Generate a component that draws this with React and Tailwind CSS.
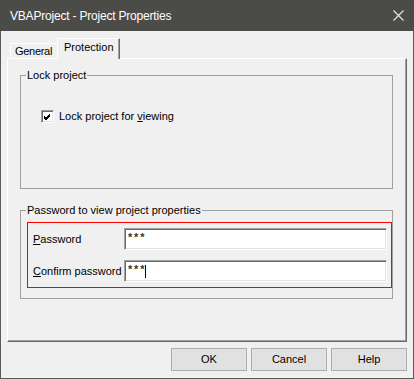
import React from "react";

const font = { fontFamily: '"Liberation Sans", Arial, sans-serif' };

function Checkbox() {
  return (
    <span className="w-[13px] h-[13px] bg-white border border-t-[#a0a0a0] border-l-[#a0a0a0] border-b-white border-r-white shadow-[inset_1px_1px_0_#696969,inset_-1px_-1px_0_#e3e3e3] flex items-center justify-center">
      <svg width="9" height="9" viewBox="0 0 9 9">
        <path d="M1 4 L3 6 L7 2 M1 5 L3 7 L7 3 M1 6 L3 8 L7 4" stroke="#000" strokeWidth="1" fill="none" />
      </svg>
    </span>
  );
}

function Field({ value, caret }) {
  return (
    <div className="w-[263px] h-[22px] bg-white border border-t-[#a0a0a0] border-l-[#a0a0a0] border-b-white border-r-white shadow-[inset_1px_1px_0_#696969,inset_-1px_-1px_0_#e3e3e3] pl-[3px] flex items-center">
      <span className="text-[11px] font-bold tracking-[1.8px] leading-none -mt-[3px] text-[#333]">{value}</span>
      {caret && <span className="w-px h-[13px] bg-black -ml-[1px]" />}
    </div>
  );
}

function Button({ children }) {
  return (
    <button className="w-[76px] h-[23px] bg-[#e1e1e1] border border-[#adadad] text-[11px] text-black flex items-center justify-center">
      {children}
    </button>
  );
}

export default function App() {
  return (
    <div className="w-[414px] h-[379px] bg-[#f0f0f0] flex flex-col" style={font}>
      {/* title bar */}
      <div className="h-[31px] bg-[#4b4b48] flex items-center justify-between pl-[10px] pr-[10px]">
        <span className="text-[12px] tracking-[-0.2px] text-white">VBAProject - Project Properties</span>
        <svg width="11" height="11" viewBox="0 0 11 11">
          <path d="M0.5 0.5 L10.5 10.5 M10.5 0.5 L0.5 10.5" stroke="#e8e8e8" strokeWidth="1.1" />
        </svg>
      </div>

      <div className="flex-1 border-x border-b border-[#5a5a5a] flex flex-col px-[6px] pt-[7px]">
        {/* tabs */}
        <div className="h-[20px] flex items-end pl-[3px] relative z-10">
          <div className="w-[47px] h-[15px] border-t border-l border-white text-[11px] tracking-[-0.3px] text-black pl-[4px] pt-px leading-[13px]">
            General
          </div>
          <div className="w-[63px] h-[21px] -mb-px bg-[#f0f0f0] border-t border-l border-white border-r border-r-[#696969] shadow-[inset_-1px_0_0_#a0a0a0] text-[11px] text-black pl-[6px] pt-[2px] leading-[13px]">
            Protection
          </div>
        </div>

        {/* panel */}
        <div className="h-[284px] border-t border-l border-white border-r border-b border-r-[#696969] border-b-[#696969] shadow-[inset_-1px_-1px_0_#a0a0a0] pl-[12px] pt-[9px] flex flex-col">
          <fieldset className="w-[373px] h-[121px] border border-[#a0a0a0] px-0">
            <legend className="ml-[5px] px-px text-[11px] leading-[14px] text-black">Lock project</legend>
            <div className="mt-[28px] ml-[20px] flex items-center gap-[5px]">
              <Checkbox />
              <span className="text-[11px] text-black leading-[13px]">
                Lock project for <u className="underline-offset-[1px]">v</u>iewing
              </span>
            </div>
          </fieldset>

          <fieldset className="w-[373px] mt-[14px] border border-[#a0a0a0] px-0 pb-[10px]">
            <legend className="ml-[5px] px-px text-[11px] leading-[14px] text-black">
              Password to view project properties
            </legend>
            <div className="mt-[5px] ml-[6px] w-[365px] border border-[#ff0000] pl-[5px] pr-[4px] py-[5px] flex flex-col gap-[10px]">
              <div className="flex items-center justify-between">
                <span className="text-[11px] text-black">
                  <u className="underline-offset-[1px]">P</u>assword
                </span>
                <Field value="***" />
              </div>
              <div className="flex items-center justify-between">
                <span className="text-[11px] text-black">
                  <u className="underline-offset-[1px]">C</u>onfirm password
                </span>
                <Field value="***" caret />
              </div>
            </div>
          </fieldset>
        </div>

        {/* buttons */}
        <div className="mt-[6px] flex justify-end gap-[4px]">
          <Button>OK</Button>
          <Button>Cancel</Button>
          <Button>Help</Button>
        </div>
      </div>
    </div>
  );
}
